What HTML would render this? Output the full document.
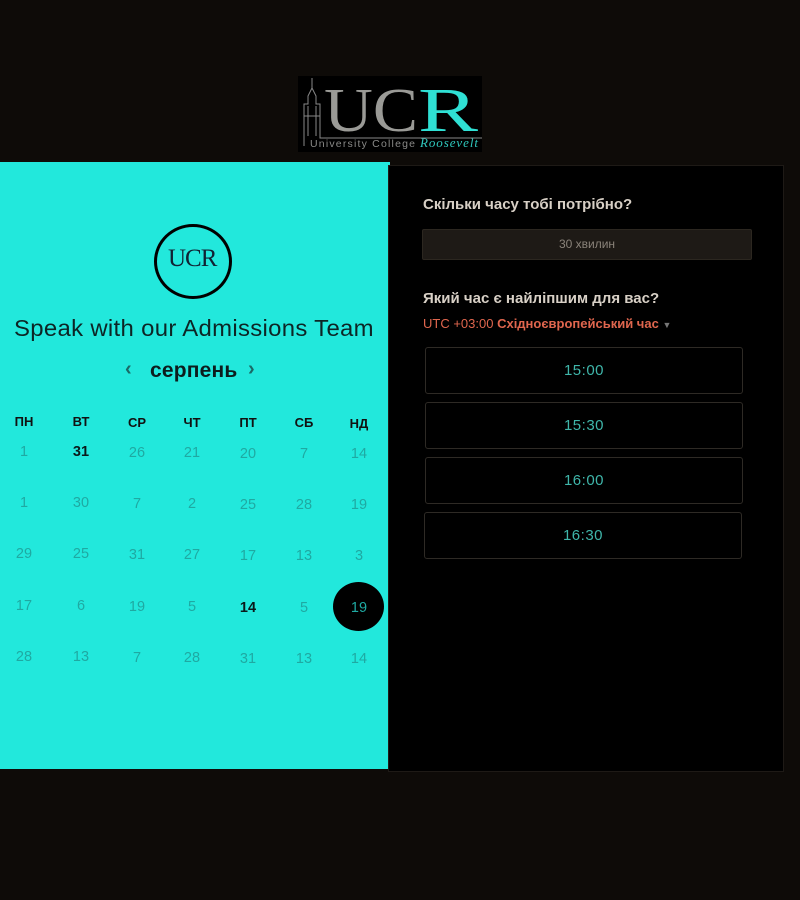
<!DOCTYPE html>
<html><head><meta charset="utf-8"><style>
*{margin:0;padding:0;box-sizing:border-box}
body{width:800px;height:900px;background:#0e0b08;position:relative;overflow:hidden;font-family:"Liberation Sans",sans-serif}
.abs{position:absolute}
#left{left:0;top:162px;width:390px;height:607px;background:#22e8dc}
#right{left:388px;top:165px;width:396px;height:607px;background:#000;border:1px solid #1e1a16}
.d{position:absolute;width:40px;text-align:center;font-size:14.5px;color:#1fa9a2;transform:translate(-20px,-8px)}
.b{color:#0a1a1a;font-weight:bold}
.h{position:absolute;width:40px;text-align:center;font-size:13px;font-weight:bold;color:#111;transform:translate(-20px,-8px)}
.slot{position:absolute;left:36px;width:318px;height:47px;border:1px solid #2e2a25;border-radius:3px;color:#3fb6aa;font-size:15px;text-align:center;line-height:45px;letter-spacing:.5px}
</style></head><body>
<div class="abs" style="left:298px;top:76px;width:184px;height:76px;background:#000">
 <svg width="184" height="76" class="abs" style="left:0;top:0">
  <g stroke="#888" fill="none" stroke-width="1">
   <path d="M6 70 V28 H10 V20 L14 12 L18 20 V28 H22 V60 M14 12 V2 M10 30 V60 M18 30 V60 M6 40 H22 M22 60 V62 H184"/>
  </g>
  <text x="26" y="55" font-family="Liberation Serif" font-size="62" fill="#9a9a96" textLength="94" lengthAdjust="spacingAndGlyphs">UC</text>
  <text x="120" y="55" font-family="Liberation Serif" font-size="62" fill="#2fe0d4" textLength="60" lengthAdjust="spacingAndGlyphs">R</text>
  <text x="12" y="71" font-family="Liberation Sans" font-size="10.5" fill="#8a8a88" textLength="105">University College</text>
  <text x="122" y="71" font-family="Liberation Serif" font-style="italic" font-size="13" fill="#2fc8bd" textLength="58">Roosevelt</text>
 </svg>
</div>
<div id="left" class="abs">
 <div class="abs" style="left:154px;top:62px;width:78px;height:75px;border:3px solid #000;border-radius:50%"></div>
 <div class="abs" style="left:168px;top:83px;font-family:'Liberation Serif';font-size:25px;color:#123;letter-spacing:-1px">UCR</div>
 <div class="abs" style="left:14px;width:360px;top:153px;font-size:23px;color:#0d2525;letter-spacing:0.3px;white-space:nowrap"><span style="display:inline-block;transform:scaleX(1.04);transform-origin:left">Speak with our Admissions Team</span></div>
 <div class="abs" style="left:125px;top:196px;font-size:20px;font-weight:bold;color:#1a6a66">‹</div>
 <div class="abs" style="left:150px;top:197px;font-size:21px;color:#0d1d1d;font-weight:bold;letter-spacing:0.2px">серпень</div>
 <div class="abs" style="left:248px;top:196px;font-size:20px;font-weight:bold;color:#1a6a66">›</div>
 <div class="abs" style="left:0;top:0;width:390px;height:600px">
  <div class="h" style="left:24px;top:260px">ПН</div><div class="h" style="left:81px;top:260px">ВТ</div><div class="h" style="left:137px;top:261px">СР</div><div class="h" style="left:192px;top:261px">ЧТ</div><div class="h" style="left:248px;top:261px">ПТ</div><div class="h" style="left:304px;top:261px">СБ</div><div class="h" style="left:359px;top:262px">НД</div>
  <div class="abs" style="left:333px;top:420px;width:51px;height:49px;border-radius:50%;background:#000"></div>
 </div>
 <div id="days"></div>
</div>
<div id="right" class="abs">
 <div class="abs" style="left:34px;top:30px;font-size:15px;font-weight:bold;color:#d8d0c6">Скільки часу тобі потрібно?</div>
 <div class="abs" style="left:33px;top:63px;width:330px;height:31px;background:#1e1a16;border:1px solid #2c2720;border-radius:2px;text-align:center;line-height:29px;font-size:12px;color:#8a837a">30 хвилин</div>
 <div class="abs" style="left:34px;top:124px;font-size:15px;font-weight:bold;color:#d8d0c6">Який час є найліпшим для вас?</div>
 <div class="abs" style="left:34px;top:150px;font-size:13px;color:#e0664e">UTC +03:00 <b>Східноєвропейський час</b> <span style="color:#777;font-size:9px">▼</span></div>
 <div class="slot" style="top:181px">15:00</div>
 <div class="slot" style="top:236px">15:30</div>
 <div class="slot" style="top:291px">16:00</div>
 <div class="slot" style="top:346px;left:35px">16:30</div>
</div>
<script>
var rows=[[1,31,26,21,20,7,14],[1,30,7,2,25,28,19],[29,25,31,27,17,13,3],[17,6,19,5,14,5,19],[28,13,7,28,31,13,14]];
var xs=[24,81,137,192,248,304,359],ys=[290,341,392,444,495];
var h='';
rows.forEach(function(r,i){r.forEach(function(v,j){var c='d';if((i==0&&j==1)||(i==3&&j==4))c='d b';h+='<div class="'+c+'" style="left:'+xs[j]+'px;top:'+(ys[i]+j*0.4)+'px">'+v+'</div>';});});
document.getElementById('days').innerHTML=h;
</script>
</body></html>
